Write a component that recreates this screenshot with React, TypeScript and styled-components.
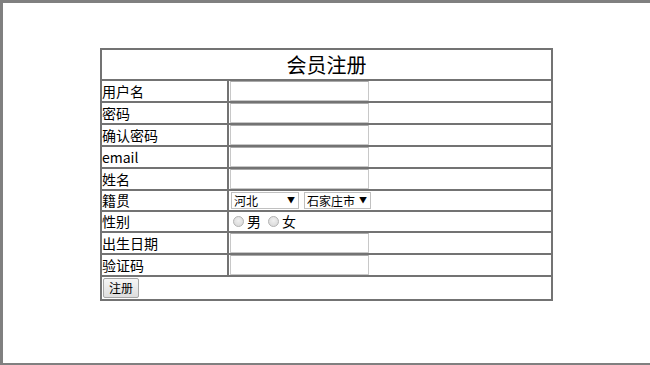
import React from "react";
import styled, { createGlobalStyle } from "styled-components";

const GlobalStyle = createGlobalStyle`
  html, body {
    margin: 0;
    padding: 0;
    background: #fff;
  }
  body {
    font-family: "Noto Sans CJK SC", "Microsoft YaHei", "Liberation Sans", sans-serif;
    color: #000;
  }
`;

const Frame = styled.div`
  box-sizing: border-box;
  width: 650px;
  height: 365px;
  border-top: 3px solid #808080;
  border-left: 3px solid #808080;
  border-bottom: 2px solid #808080;
  padding: 45px 0 0 97px;
`;

const Form = styled.table`
  width: 453px;
  border-collapse: collapse;
  border: 2px solid #737373;
  font-size: 14px;
`;

const Cell = styled.td<{ $h?: number }>`
  border: 2px solid #737373;
  padding: 0;
  height: ${(p) => p.$h ?? 20}px;
  line-height: ${(p) => (p.$h ?? 20) - 2}px;
  vertical-align: middle;
`;

const Label = styled(Cell)`
  width: 125px;
`;

const Title = styled(Cell)`
  text-align: center;
  font-size: 20px;
  line-height: 28px;
`;

const TextInput = styled.input`
  display: block;
  box-sizing: border-box;
  width: 139px;
  height: 20px;
  margin: 0 0 0 1px;
  padding: 0 2px;
  border: 1px solid #c8c8c8;
  border-top-color: #a9a9a9;
  font-size: 13px;
  outline: none;
`;

const SelectRow = styled.div`
  display: flex;
  align-items: center;
  gap: 5px;
  padding-left: 2px;
`;

const SelectBox = styled.span<{ $w: number }>`
  position: relative;
  display: inline-block;
  width: ${(p) => p.$w}px;
  height: 17px;

  &::after {
    content: "▼";
    position: absolute;
    right: 4px;
    top: 3px;
    font-size: 8px;
    line-height: 10px;
    pointer-events: none;
  }
`;

const Select = styled.select`
  appearance: none;
  box-sizing: border-box;
  width: 100%;
  height: 17px;
  margin: 0;
  padding: 0 0 0 2px;
  border: 1px solid #c0c0c0;
  background: #fff;
  font-family: inherit;
  font-size: 12px;
  line-height: 15px;
  color: #000;
  outline: none;
`;

const RadioGroup = styled.div`
  display: flex;
  align-items: center;
  padding-left: 3px;
  font-size: 14px;
`;

const RadioLabel = styled.label`
  display: inline-flex;
  align-items: center;
  margin-right: 6px;
`;

const Radio = styled.input`
  appearance: none;
  box-sizing: border-box;
  width: 11px;
  height: 11px;
  margin: 0 3px 0 1px;
  border: 1px solid #b4b4b4;
  border-radius: 50%;
  background: radial-gradient(circle at 50% 40%, #f0f0f0 0%, #d4d4d4 100%);
`;

const Button = styled.button`
  display: block;
  box-sizing: border-box;
  height: 20px;
  margin: 0 0 0 1px;
  padding: 0 5px;
  border: 1px solid #a6a6a6;
  border-radius: 2px;
  background: linear-gradient(#f6f6f6, #dedede);
  font-family: inherit;
  font-size: 12px;
  line-height: 18px;
  color: #000;
`;

const textRows = ["用户名", "密码", "确认密码", "email", "姓名"];

export default function App() {
  return (
    <>
      <GlobalStyle />
      <Frame>
        <Form>
          <tbody>
            <tr>
              <Title colSpan={2} $h={29}>
                会员注册
              </Title>
            </tr>
            {textRows.map((label) => (
              <tr key={label}>
                <Label>{label}</Label>
                <Cell>
                  <TextInput type={label.includes("密码") ? "password" : "text"} />
                </Cell>
              </tr>
            ))}
            <tr>
              <Label $h={19}>籍贯</Label>
              <Cell $h={19}>
                <SelectRow>
                  <SelectBox $w={68}>
                    <Select defaultValue="河北">
                      <option>河北</option>
                      <option>河南</option>
                      <option>山东</option>
                    </Select>
                  </SelectBox>
                  <SelectBox $w={67}>
                    <Select defaultValue="石家庄市">
                      <option>石家庄市</option>
                      <option>保定市</option>
                      <option>唐山市</option>
                    </Select>
                  </SelectBox>
                </SelectRow>
              </Cell>
            </tr>
            <tr>
              <Label $h={19}>性别</Label>
              <Cell $h={19}>
                <RadioGroup>
                  <RadioLabel>
                    <Radio type="radio" name="sex" />男
                  </RadioLabel>
                  <RadioLabel>
                    <Radio type="radio" name="sex" />女
                  </RadioLabel>
                </RadioGroup>
              </Cell>
            </tr>
            <tr>
              <Label>出生日期</Label>
              <Cell>
                <TextInput type="text" />
              </Cell>
            </tr>
            <tr>
              <Label>验证码</Label>
              <Cell>
                <TextInput type="text" />
              </Cell>
            </tr>
            <tr>
              <Cell colSpan={2} $h={22}>
                <Button type="button">注册</Button>
              </Cell>
            </tr>
          </tbody>
        </Form>
      </Frame>
    </>
  );
}
